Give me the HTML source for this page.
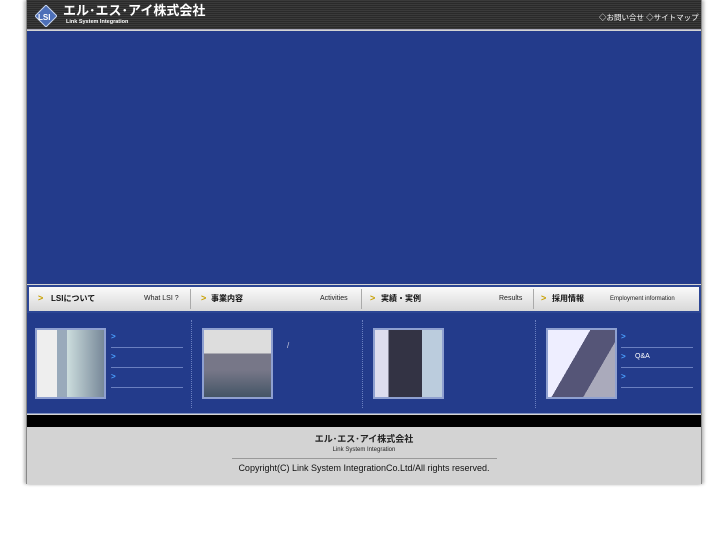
<!DOCTYPE html>
<html><head><meta charset="utf-8"><style>
*{margin:0;padding:0;box-sizing:border-box}
body{width:727px;height:545px;background:#fff;font-family:"Liberation Sans","Noto Sans CJK JP",sans-serif;position:relative;overflow:hidden}
.wrap{position:absolute;left:26px;top:0;width:676px;height:484px;background:#d3d3d3;border-left:1px solid #888;border-right:1px solid #888;box-shadow:-2px 0 3px #bbb,2px 0 3px #bbb}
.wrap div,.wrap span,.wrap b{white-space:nowrap}
.hd{position:absolute;left:0;top:0;width:674px;height:30px;background:repeating-linear-gradient(#3a3a3a 0 1px,#2a2a2a 1px 2px);border-bottom:1px solid #aab}
.blue{position:absolute;left:0;width:674px;background:#233b8b}
.nav{position:absolute;left:0;top:285px;width:674px;height:28px;background:linear-gradient(#fafafa,#d8d8d8);border:2px solid #2c4694;font-size:7px;color:#222}
.nav span{position:absolute;top:7px;line-height:10px}
.nav b{position:absolute;top:6px;font-size:8px;line-height:11px;color:#111}
.nav i{position:absolute;top:6px;line-height:11px;color:#c8a000;font-style:normal;font-size:9px;font-weight:bold}
.nav .d{position:absolute;top:2px;width:1px;height:20px;background:#aaa}
.img{position:absolute;top:328px;width:71px;height:71px;border:2px solid #8fa0d0;}
.vd{position:absolute;top:320px;width:0;height:88px;border-left:1px dotted #6a7fc0}
.ln{position:absolute;height:1px;background:#6a7fc0}
.ar{position:absolute;color:#4aa0ff;font-size:8px;font-weight:bold;line-height:9px}
</style></head><body>
<div class="wrap">
<div class="hd">
 <svg style="position:absolute;left:8px;top:5px" width="22" height="22"><polygon points="11,0 22,11 11,22 0,11" fill="#4d6fb8" stroke="#c9d6ee"/><text x="3" y="15" font-size="8" fill="#fff" font-weight="bold" font-family="Liberation Sans">LSI</text></svg>
 <div style="position:absolute;left:36px;top:3px;color:#fff;font-size:13px;line-height:15px;font-weight:bold">エル･エス･アイ株式会社</div>
 <div style="position:absolute;left:39px;top:19px;color:#fff;font-size:5.5px;line-height:7px;font-weight:bold">Link System Integration</div>
 <div style="position:absolute;left:572px;top:13px;color:#fff;font-size:7.5px;line-height:10px">◇お問い合せ ◇サイトマップ</div>
</div>
<div class="blue" style="top:31px;height:253px"></div>
<div class="nav">
 <i style="left:9px">&gt;</i><b style="left:22px">LSIについて</b><span style="left:115px">What LSI ?</span><div class="d" style="left:161px"></div>
 <i style="left:172px">&gt;</i><b style="left:182px">事業内容</b><span style="left:291px">Activities</span><div class="d" style="left:332px"></div>
 <i style="left:341px">&gt;</i><b style="left:352px">実績・実例</b><span style="left:470px">Results</span><div class="d" style="left:504px"></div>
 <i style="left:512px">&gt;</i><b style="left:523px">採用情報</b><span style="left:581px;font-size:6px">Employment information</span>
</div>
<div class="blue" style="top:313px;height:101px;border-bottom:1px solid #7d8fc0"></div>
<div style="position:absolute;left:0;top:415px;width:674px;height:12px;background:#000"></div>
<div class="vd" style="left:164px"></div><div class="vd" style="left:335px"></div><div class="vd" style="left:508px"></div>
<div class="img" style="left:8px;background:linear-gradient(90deg,#eee 0 30%,#9ab 30% 45%,#cdd 45%,#789)"></div>
<div class="img" style="left:175px;background:linear-gradient(#ddd 0 35%,#778 35% 60%,#456)"></div>
<div class="img" style="left:346px;background:linear-gradient(90deg,#dde 0 20%,#334 20% 70%,#bcd 70%)"></div>
<div class="img" style="left:519px;background:linear-gradient(120deg,#eef 0 40%,#557 40% 70%,#aab 70%)"></div>
<div class="ar" style="left:84px;top:332px">&gt;</div><div class="ln" style="left:84px;top:347px;width:72px"></div>
<div class="ar" style="left:84px;top:352px">&gt;</div><div class="ln" style="left:84px;top:367px;width:72px"></div>
<div class="ar" style="left:84px;top:372px">&gt;</div><div class="ln" style="left:84px;top:387px;width:72px"></div>
<div style="position:absolute;left:260px;top:341px;color:#ccd;font-size:8px">/</div>
<div class="ar" style="left:594px;top:332px">&gt;</div><div class="ln" style="left:594px;top:347px;width:72px"></div>
<div class="ar" style="left:594px;top:352px">&gt;</div><div style="position:absolute;left:608px;top:352px;color:#fff;font-size:7px;line-height:9px">Q&amp;A</div><div class="ln" style="left:594px;top:367px;width:72px"></div>
<div class="ar" style="left:594px;top:372px">&gt;</div><div class="ln" style="left:594px;top:387px;width:72px"></div>
<div style="position:absolute;left:0;top:433px;width:674px;text-align:center;font-size:9px;line-height:12px;font-weight:bold;color:#222">エル･エス･アイ株式会社</div>
<div style="position:absolute;left:0;top:446px;width:674px;text-align:center;font-size:6px;line-height:8px;color:#222">Link System Integration</div>
<div style="position:absolute;left:205px;top:458px;width:265px;height:1px;background:#999"></div>
<div style="position:absolute;left:0;top:463px;width:674px;text-align:center;font-size:9px;line-height:11px;color:#111">Copyright(C) Link System IntegrationCo.Ltd/All rights reserved.</div>
</div>
</body></html>
